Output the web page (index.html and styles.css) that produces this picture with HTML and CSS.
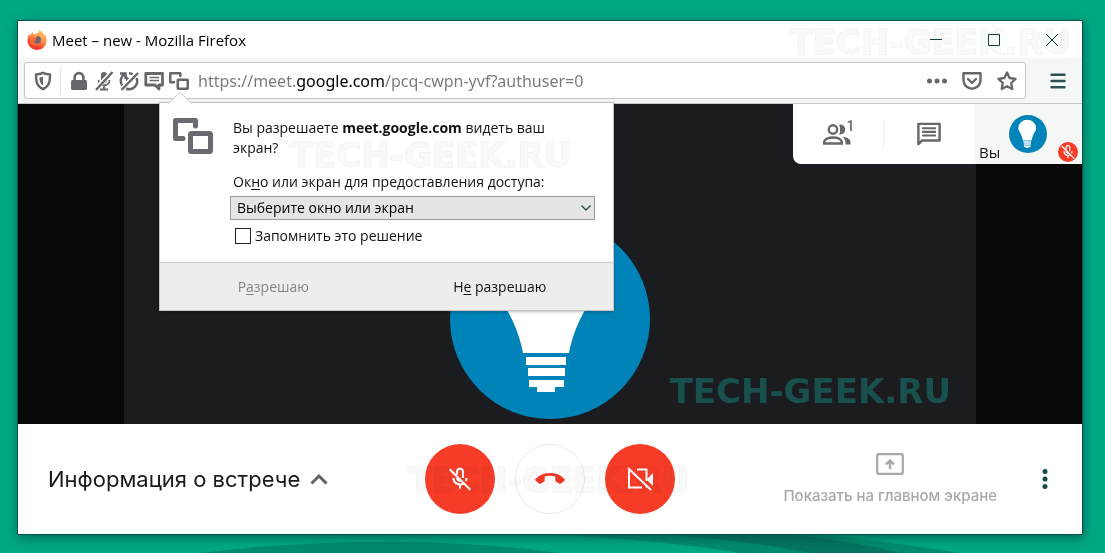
FILE: index.html
```html
<!DOCTYPE html>
<html lang="ru">
<head>
<meta charset="utf-8">
<title>Meet – new - Mozilla Firefox</title>
<link rel="stylesheet" href="styles.css">
</head>
<body>
<svg class="symbols" aria-hidden="true">
  <symbol id="bulb" viewBox="0 0 200 200">
    <circle cx="100" cy="100" r="100" fill="#0083b8"/>
    <path fill="#fff" d="M73 134C70 118 64 103 57 91C51 82 49 78 49 69A47 44 0 0 1 143 69C143 78 141 82 135 91C128 103 122 118 119 134ZM76 138h40v8H76zM78 149h37v8H78zM79 161h35v7h-9v5H87v-5h-8z"/>
  </symbol>
  <symbol id="mic-off" viewBox="0 0 24 24">
    <path fill="none" stroke="currentColor" stroke-width="1.9" d="M9.3 8V5.2a2.7 2.7 0 0 1 5.4 0V11M9.3 9.5V11a2.7 2.7 0 0 0 3.6 2.6M6 11c0 6 7 7.600 10 4.500M18 11c0 1.200-.2 2-.6 2.800M12 17v4M2.500 3L21.500 22"/>
  </symbol>
  <symbol id="windows" viewBox="0 0 40 36">
    <path fill="none" stroke="currentColor" stroke-width="5" stroke-linejoin="round" stroke-linecap="round" d="M10 20.500H2.500V2.500h20V8"/>
    <rect x="17.500" y="15.500" width="20" height="18" rx="1" fill="none" stroke="currentColor" stroke-width="5"/>
  </symbol>
</svg>
<svg class="wave" viewBox="0 0 1105 40" preserveAspectRatio="none" aria-hidden="true">
  <path fill="#018b70" d="M200 40C330 24 460 26 560 40ZM560 22C700 8 820 18 960 40H740C680 30 620 25 560 22Z"/>
  <path fill="#057462" d="M620 19C730 12 830 22 900 40H810C760 30 700 23 620 19Z"/>
</svg>

<main class="window">
  <header class="titlebar">
    <svg class="fox" viewBox="0 0 20 20" aria-hidden="true">
      <defs><linearGradient id="flame" x1="0.8" y1="0" x2="0.3" y2="1"><stop offset="0" stop-color="#ffcf70"/><stop offset=".45" stop-color="#ff9147"/><stop offset=".8" stop-color="#f43c2e"/></linearGradient></defs>
      <path fill="url(#flame)" d="M2.200 4l1 1.300L5.500 2l1.300 2.500C8.500 3.500 10 3.500 11 3L12.500 0C16 2 16.500 4 17.500 5L18 4C22 11 18.500 20 10 20C2 20-2 11 2.200 4Z"/>
      <path fill="#6d6677" d="M10.500 6C14 6.500 14.500 9 13.500 12C12 15 8 14 6.500 11L10 10.500L8 9Z"/>
      <path fill="#f86a36" d="M3 8C5 6 8 7 9 9L6 10C6 14 10 15 13 13C11 17 5 16 3 13Z"/>
    </svg>
    <h1 class="title">Meet – new - Mozilla Firefox</h1>
    <div class="window-controls">
      <button aria-label="Свернуть"><svg viewBox="0 0 12 12"><path d="M0 5.500h12"/></svg></button>
      <button aria-label="Развернуть"><svg viewBox="0 0 12 12"><path d="M.5.500h11v11H.5z"/></svg></button>
      <button aria-label="Закрыть"><svg viewBox="0 0 12 12"><path d="M0 0l12 12M12 0L0 12"/></svg></button>
    </div>
  </header>

  <div class="toolbar">
    <div class="urlbar">
      <button class="shield" aria-label="Защита"><svg viewBox="0 0 20 20"><path fill="none" stroke="currentColor" stroke-width="2.400" stroke-linejoin="round" d="M10 1.800C12.500 3 15 3.300 17 3.400C17 11 16 15.500 10 18.200C4 15.500 3 11 3 3.400C5 3.300 7.500 3 10 1.800Z"/><path d="M10 5.500v9C7 12.500 6.500 10 6.400 6.500C8 6.300 9 6 10 5.500Z"/></svg></button>
      <div class="permissions">
        <button aria-label="Соединение защищено"><svg viewBox="0 0 20 20"><rect x="2" y="9" width="16" height="10" rx="1.500"/><path fill="none" stroke="currentColor" stroke-width="2.600" d="M5.600 10V6.500a4.400 4.400 0 0 1 8.800 0V10"/></svg></button>
        <button aria-label="Микрофон отключён"><svg viewBox="0 0 20 20"><rect x="7" y="1" width="6" height="11" rx="3"/><path fill="none" stroke="currentColor" stroke-width="1.800" d="M4.500 9c0 7 11 7 11 0M10 14v4M6 18.500h8"/><path stroke="#fff" stroke-width="4.500" d="M2 18L18 1"/><path stroke="currentColor" stroke-width="2.400" d="M2 19L18.500 1"/></svg></button>
        <button aria-label="Автовоспроизведение отключено"><svg viewBox="0 0 20 20"><path fill="none" stroke="currentColor" stroke-width="2.500" d="M5 3.500A8 8 0 0 0 3.500 15M7 17.500A8 8 0 0 0 17.500 7M1 2.500h5.500V8M10 2.200a8 8 0 0 1 4 1.200"/><path d="M7 5l7 5-7 5z"/><path stroke="#fff" stroke-width="4.500" d="M3 18L18 2"/><path stroke="currentColor" stroke-width="2.400" d="M2.500 19L19 2"/></svg></button>
        <button aria-label="Уведомления"><svg viewBox="0 0 20 20"><path fill="none" stroke="currentColor" stroke-width="2.800" stroke-linejoin="round" d="M1.800 2.500h16.700v11.500H15v4L11 14H1.800Z"/><path stroke="currentColor" stroke-width="1.500" d="M5.500 6.500h9.500M5.500 9.500h9.500"/></svg></button>
        <button aria-label="Доступ к экрану"><svg viewBox="0 0 40 36"><use href="#windows"/></svg></button>
      </div>
      <input class="address" type="text" aria-label="Адрес" value="https://meet.google.com/pcq-cwpn-yvf?authuser=0">
      <div class="page-actions">
        <button aria-label="Действия на странице"><svg viewBox="0 0 20 20"><circle cx="2.500" cy="10" r="2.500"/><circle cx="10" cy="10" r="2.500"/><circle cx="17.500" cy="10" r="2.500"/></svg></button>
        <button aria-label="Сохранить в Pocket"><svg viewBox="0 0 20 20"><path fill="none" stroke="currentColor" stroke-width="2.400" stroke-linejoin="round" stroke-linecap="round" d="M1.500 2.200h17v7a8.500 8.500 0 0 1-17 0ZM6 8l4 4 4-4"/></svg></button>
        <button aria-label="Добавить в закладки"><svg viewBox="0 0 20 20"><path fill="none" stroke="currentColor" stroke-width="2.300" stroke-linejoin="round" d="M10 1.500l2.600 5.500 6 .8-4.400 4.200 1.100 6L10 15.200 4.700 18l1.100-6L1.400 7.800l6-.8Z"/></svg></button>
      </div>
    </div>
    <button class="menu" aria-label="Меню"><svg viewBox="0 0 16 16"><path stroke="currentColor" stroke-width="2.400" stroke-linecap="round" d="M1.500 1.700h13M1.500 8h13M1.500 14.300h13"/></svg></button>
  </div>

  <section class="stage">
    <div class="video">
      <svg class="avatar" viewBox="0 0 200 200" role="img" aria-label="Вы"><use href="#bulb"/></svg>
    </div>
    <div class="people-card">
      <button class="tab" aria-label="Участники: 1">
        <svg viewBox="0 0 28 22"><g fill="none" stroke="currentColor" stroke-width="2.400"><circle cx="10" cy="6.500" r="4.200"/><path d="M1.200 20.500V18.500C2.500 15.500 6 14.500 10 14.500s7.500 1 8.800 4v2Z"/></g><path d="M15.800 1.500a5.500 5.500 0 0 1 0 10.200C17.800 9 17.800 4.500 15.800 1.500ZM20 13.800c4 .7 7.500 2.200 7.500 5.200v2.600H22.500C22.600 18 22 16 20 13.800ZM17 1.500C24 1 24 12 17 11.500Z"/></svg>
        <span class="count">1</span>
      </button>
      <button class="tab" aria-label="Чат">
        <svg viewBox="0 0 28 26"><path fill="none" stroke="currentColor" stroke-width="2.600" stroke-linejoin="round" d="M2.500 24V2h23v18H6.500Z"/><path stroke="currentColor" stroke-width="2.200" d="M6.500 6.700h15M6.500 10.700h15M6.500 14.700h15"/></svg>
      </button>
      <div class="self">
        <span>Вы</span>
        <svg class="self-avatar" viewBox="0 0 200 200" aria-hidden="true"><use href="#bulb"/></svg>
        <span class="muted"><svg viewBox="0 0 24 24" aria-hidden="true"><use href="#mic-off"/></svg></span>
      </div>
    </div>
  </section>

  <footer class="controls">
    <button class="details">Информация о встрече
      <svg viewBox="0 0 18 12" aria-hidden="true"><path fill="none" stroke="#5f6368" stroke-width="3" d="M1.500 10.500L9 3l7.500 7.500"/></svg>
    </button>
    <div class="call-buttons">
      <button class="round red" aria-label="Включить микрофон"><svg viewBox="0 0 24 24"><use href="#mic-off"/></svg></button>
      <button class="round" aria-label="Завершить звонок"><svg class="hangup" viewBox="0 0 30 14"><path d="M1 6.500C8-.8 22-.8 29 6.500C30.300 7.500 30 8 29.300 8.800L26 11.500C25.300 12 24.500 12 24 11.500C22.500 10.500 20.500 9.800 20.300 8.500V4.600C17 3.600 13 3.600 9.700 4.600V8.500C9.500 9.800 7.500 10.500 6 11.500C5.500 12 4.700 12 4 11.500L.7 8.800C0 8 -.3 7.500 1 6.500Z"/></svg></button>
      <button class="round red" aria-label="Включить камеру"><svg viewBox="0 0 26 24"><path fill="none" stroke="currentColor" stroke-width="2" d="M10 2.500h9.500V14M15 20.500H2V3.500M19.500 18v2.500M1 1l23 22"/><path d="M20 12l6-6v13l-6-6z"/></svg></button>
    </div>
    <div class="right">
      <button class="present" disabled>
        <svg viewBox="0 0 28 22" aria-hidden="true"><rect x="1.200" y="1.200" width="25.600" height="19.600" rx="1.500" fill="none" stroke="currentColor" stroke-width="2.200"/><path fill="none" stroke="currentColor" stroke-width="2.400" d="M14 16V7.500M10 11.500L14 7.500l4 4"/></svg>
        <span>Показать на главном экране</span>
      </button>
      <button class="more" aria-label="Ещё"><svg viewBox="0 0 6 20"><circle cx="3" cy="2.600" r="2.500"/><circle cx="3" cy="10" r="2.500"/><circle cx="3" cy="17.400" r="2.500"/></svg></button>
    </div>
  </footer>

  <form class="popup">
    <svg class="arrow" viewBox="0 0 24 12" aria-hidden="true"><path fill="#fff" stroke="#c4c4c4" d="M0 11.500L12 .5 24 11.500"/></svg>
    <div class="popup-body">
      <svg class="popup-icon" viewBox="0 0 40 36" aria-hidden="true"><use href="#windows"/></svg>
      <div class="popup-fields">
        <p>Вы разрешаете <b>meet.google.com</b> видеть ваш экран?</p>
        <label for="source">Ок<u>н</u>о или экран для предоставления доступа:</label>
        <div class="picker">
          <select id="source"><option>Выберите окно или экран</option></select>
          <svg viewBox="0 0 10 6" aria-hidden="true"><path fill="none" stroke="#24474b" stroke-width="1.300" d="M.5.500L5 5 9.500.500"/></svg>
        </div>
        <div class="remember"><input type="checkbox" id="remember"><label for="remember">Запомнить это решение</label></div>
      </div>
    </div>
    <div class="popup-actions">
      <button type="button" disabled><span>Р<u>а</u>зрешаю</span></button>
      <button type="button"><span>Н<u>е</u> разрешаю</span></button>
    </div>
  </form>

  <span class="watermark mark-title">TECH-GEEK.RU</span>
  <span class="watermark mark-popup">TECH-GEEK.RU</span>
  <span class="watermark mark-video">TECH-GEEK.RU</span>
  <span class="watermark mark-footer">TECH-GEEK.RU</span>
</main>
</body>
</html>
```
FILE: styles.css
```css
* { box-sizing: border-box; }
body {
  margin: 0;
  min-height: 100vh;
  padding: 20px 22px 18px 17px;
  background: #00a884;
  font: 15px/20px "Open Sans", "Noto Sans", sans-serif;
  color: #111;
  position: relative;
  display: flex;
}
button { border: 0; padding: 0; background: none; font: inherit; color: inherit; display: flex; align-items: center; justify-content: center; }
svg { display: block; fill: currentColor; overflow: visible; }
.symbols { position: absolute; width: 0; height: 0; }
.wave { position: absolute; left: 0; bottom: 0; width: 100%; height: 40px; }

.window {
  position: relative;
  flex: 1;
  display: flex;
  flex-direction: column;
  border: 1px solid #0a4f48;
  background: #fff;
  box-shadow: 1px 3px 10px rgba(0, 70, 60, .65);
}

.titlebar { display: flex; align-items: center; height: 37px; padding-left: 9px; gap: 5px; }
.fox { width: 20px; height: 20px; }
.title { flex: 1; margin: 0; font-size: 15px; font-weight: 400; color: #000; }
.window-controls { display: flex; z-index: 2; padding-right: 24px; gap: 46px; }
.window-controls svg { width: 12px; height: 12px; fill: none; stroke: #123f42; }

.toolbar {
  display: flex;
  align-items: center;
  height: 46px;
  padding: 0 16px 0 6px;
  gap: 24px;
  background: #f5f7f7;
  border-bottom: 1px solid #c8c8c8;
  color: #68666c;
}
.urlbar {
  flex: 1;
  display: flex;
  align-items: center;
  height: 37px;
  background: #fff;
  border: 1px solid #c9c5c7;
  border-radius: 3px;
}
.urlbar svg { width: 20px; height: 20px; }
.shield { width: 36px; height: 26px; border-right: 1px solid #e4e4e6; }
.permissions { display: flex; gap: 5px; padding-left: 8px; }
.address {
  flex: 1;
  min-width: 0;
  margin-left: 9px;
  padding: 0;
  border: 0;
  font: 16px/24px "Noto Sans", sans-serif;
  color: transparent;
  caret-color: #222;
  background: linear-gradient(90deg, #75787c 98px, #000 98px, #000 187px, #75787c 187px);
  -webkit-background-clip: text;
  background-clip: text;
}
.page-actions { display: flex; gap: 15px; padding-right: 8px; }
.menu { color: #2d5054; }
.menu svg { width: 16px; height: 16px; }

.stage { position: relative; flex: 1; min-height: 320px; display: flex; justify-content: center; background: #080808; }
.video { width: 80%; display: flex; align-items: flex-end; justify-content: center; padding-bottom: 5px; background: #1b1c20; }
.avatar { width: 200px; height: 200px; }
.people-card {
  position: absolute;
  top: 0;
  right: 0;
  display: flex;
  height: 60px;
  background: #fff;
  border-bottom-left-radius: 8px;
  overflow: hidden;
  color: #64676b;
}
.tab { position: relative; width: 91px; }
.tab + .tab { width: 90px; }
.tab svg { width: 28px; height: 24px; }
.tab:first-child::after { content: ""; position: absolute; right: 0; top: 15px; height: 30px; border-right: 1px solid #eee; }
.count { font: 500 14px/14px Roboto, sans-serif; align-self: flex-start; margin: 15px 0 0 -4px; }
.self { display: flex; align-items: flex-end; width: 108px; padding: 0 4px 2px 5px; background: #f5f7f7; color: #111; font-size: 15px; }
.self-avatar { width: 38px; height: 38px; margin: 0 11px 9px auto; }
.muted { width: 20px; height: 20px; flex: none; display: grid; place-items: center; border-radius: 50%; background: #f63b26; color: #fff; }
.muted svg { width: 16px; height: 16px; }

.controls { display: grid; grid-template-columns: 1fr auto 1fr; align-items: center; height: 110px; padding: 0 30px; }
.details { justify-self: start; gap: 10px; font: 22px/28px Inter, "Open Sans", sans-serif; color: #171b1e; }
.details svg { width: 18px; height: 12px; }
.call-buttons { display: flex; gap: 20px; }
.round { width: 70px; height: 70px; border-radius: 50%; border: 1px solid #ebebeb; color: #f63b26; }
.round svg { width: 26px; height: 26px; }
.round .hangup { width: 30px; height: 14px; }
.round.red { background: #f63b26; border: 0; color: #fff; }
.right { display: flex; justify-content: flex-end; align-items: center; gap: 45px; padding-right: 4px; }
.present { flex-direction: column; gap: 11px; color: #a5a8ad; font: 500 15px/20px Inter, "Open Sans", sans-serif; }
.present svg { width: 28px; height: 22px; }
.more { color: #144b4b; }
.more svg { width: 6px; height: 20px; }

.popup {
  position: absolute;
  left: 141px;
  top: 81px;
  width: 455px;
  background: #fff;
  border: 1px solid #c4c4c4;
  box-shadow: 0 1px 3px rgba(0, 0, 0, .25);
  font-size: 14px;
}
.arrow { position: absolute; left: 8px; top: -11px; width: 24px; height: 12px; }
.popup-body { display: flex; gap: 16px; padding: 15px 18px 16px 13px; }
.popup-icon { flex: none; width: 40px; height: 36px; color: #6c6970; }
.popup-fields { flex: 1; display: flex; flex-direction: column; }
.popup-fields p { margin: 0 0 14px 4px; width: 330px; }
.popup-fields > label { margin: 0 0 4px 4px; }
u { text-underline-offset: 2px; }
.picker { display: grid; align-items: center; justify-items: end; margin-left: 1px; }
.picker > * { grid-area: 1 / 1; }
.picker svg { width: 10px; height: 6px; margin-right: 4px; }
select {
  appearance: none;
  width: 100%;
  height: 24px;
  padding: 0 6px;
  border: 1px solid #9b9ba2;
  border-radius: 0;
  background: #e5e5e6;
  font: inherit;
  color: #000;
}
.remember { display: flex; align-items: center; gap: 4px; margin: 6px 0 0 6px; }
.remember input { appearance: none; width: 16px; height: 16px; margin: 0; border: 1px solid #222; background: #fff; }
.popup-actions { display: flex; border-top: 1px solid #c8c8c8; background: #ededed; }
.popup-actions button { flex: 1; height: 47px; }
.popup-actions button:disabled { color: #858585; }

.watermark { position: absolute; z-index: 1; font: 700 34px/40px "DejaVu Sans", sans-serif; color: #f8f9f9; -webkit-text-stroke: 1px #eee; paint-order: stroke fill; pointer-events: none; white-space: nowrap; mix-blend-mode: multiply; }
.mark-title { right: 11px; top: 1px; }
.mark-popup { left: 272px; top: 114px; }
.mark-video { right: 131px; top: 350px; color: #17504d; -webkit-text-stroke: 0; mix-blend-mode: normal; }
.mark-footer { left: 390px; bottom: 34px; }
```
